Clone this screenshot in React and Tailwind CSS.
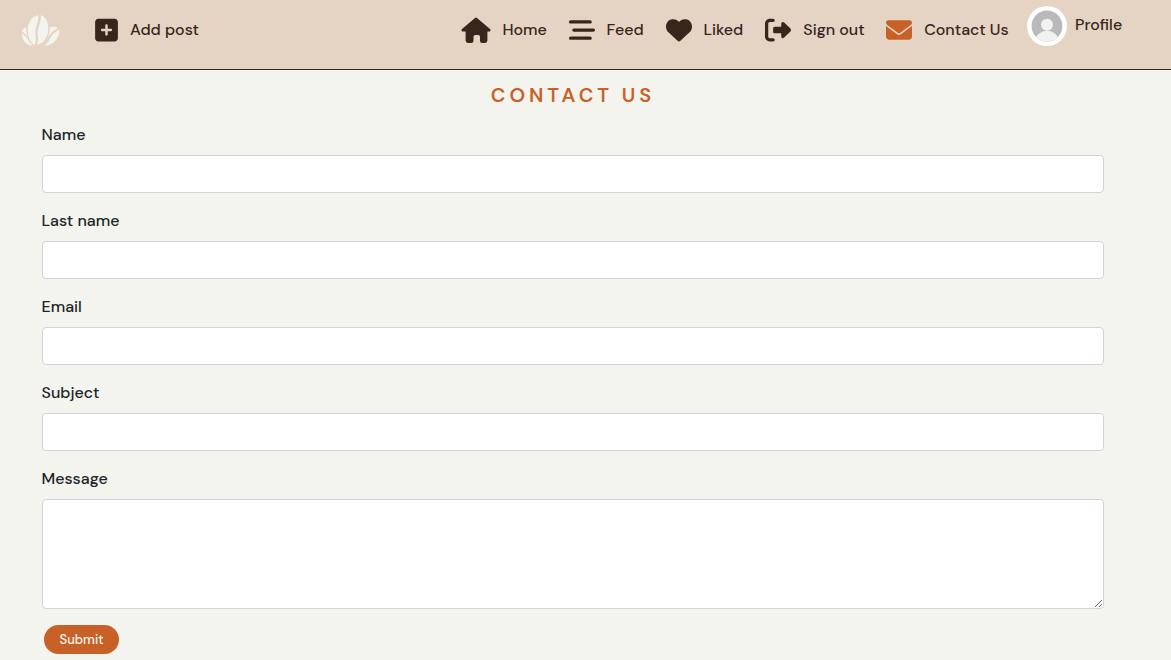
import React from "react";
import { FaSquarePlus, FaBarsStaggered, FaHeart, FaRightFromBracket, FaEnvelope } from "react-icons/fa6";

function Logo() {
  return (
    <svg className="mt-[15px] h-8 w-10 shrink-0" viewBox="0 0 40 32" fill="#f3f4ed">
      <path d="M14.8 1.1C9.5 3 6.5 9.2 6.8 16.2C7 22 9 27.4 13.6 30C16.1 25 13.7 20.6 14.5 15C15.1 10 18.3 5.4 17.1.3C16.4.2 15.7.7 14.8 1.1Z" />
      <path d="M19.6.3C21 6 17.3 10.5 16.8 16C16.4 21 18.2 24.5 15.9 29.5C22.7 29.2 27.6 21.3 27.3 12.8C27 6.5 23.8.8 19.6.3Z" />
      <path d="M5.2 12.5C2.6 12.4 1.2 14.6 1 16.7C3.6 18.1 5.5 19.8 7 22.4C5.7 19.3 5.1 16.1 5.2 12.5Z" />
      <path d="M.8 18.5C.7 25 5.7 31.2 11.7 30.6C9.7 28.9 8.5 26.7 7 24.6C5.4 22.1 3.3 19.8.8 18.5Z" />
      <path d="M28.8 12.5C29 18.9 26.6 24.6 22.6 28.2C25.8 25.9 26.4 22.5 29.1 19.2C31.4 16.5 34.2 15.1 36.8 13.3C34.9 11.8 31.3 11.4 28.8 12.5Z" />
      <path d="M38.1 14.5C34.9 17.1 31.7 18.6 29.7 22.2C28 25.4 26.7 28.4 23.1 30.4C30.9 32.2 39.8 22.5 38.1 14.5Z" />
    </svg>
  );
}

function HouseIcon() {
  return (
    <svg className="h-[26px] w-[30px] shrink-0" viewBox="0 0 30 26" fill="currentColor">
      <path d="M14 .9Q15 .1 16 .9L29 12.1Q30 13.1 29.3 14Q29 14.6 28 14.6H26.4V23.6Q26.4 26 24 26H21.2Q19 26 19 23.7V19.8Q19 18 17.3 18H14.4Q12.5 18 12.5 19.8V23.7Q12.5 26 10.2 26H7Q4.6 26 4.6 23.6V14.6H2Q1 14.6.7 14Q.1 13 1 12.1Z" />
    </svg>
  );
}

function Avatar() {
  return (
    <svg className="h-10 w-10 shrink-0" viewBox="0 0 40 40">
      <defs>
        <clipPath id="avatar"><circle cx="20" cy="20" r="15.4" /></clipPath>
      </defs>
      <circle cx="20" cy="20" r="20" fill="#fff" />
      <g clipPath="url(#avatar)">
        <rect width="40" height="40" fill="#b9b9b9" />
        <circle cx="20" cy="18.7" r="6" fill="#f1f1f1" />
        <ellipse cx="20" cy="35" rx="11.5" ry="10.2" fill="#f1f1f1" />
      </g>
    </svg>
  );
}

function NavLink({ icon, label, className }) {
  return (
    <a href="#" className={`mt-[17px] flex h-[26px] items-center whitespace-nowrap leading-[26px] ${className}`}>
      {icon}
      <span>{label}</span>
    </a>
  );
}

const fields = ["Name", "Last name", "Email", "Subject"];

export default function App() {
  return (
    <div className="h-[660px] overflow-hidden bg-[#f3f4ed] font-['DM_Sans','Inter',sans-serif] text-base font-medium text-[#212529]">
      <header className="flex h-[70px] items-start border-b border-[#38251c] bg-[#e5d4c4] text-[#38251c]">
        <div className="ml-[21px] w-[74px]"><Logo /></div>
        <NavLink icon={<FaSquarePlus className="h-[26px] w-[23px]" />} label="Add post" className="w-[366px] gap-3" />
        <NavLink icon={<HouseIcon />} label="Home" className="w-[108px] gap-[11.4px]" />
        <NavLink icon={<FaBarsStaggered className="h-[26px] w-[26px]" />} label="Feed" className="w-[96.7px] gap-[11.6px]" />
        <NavLink icon={<FaHeart className="h-[26px] w-[26px]" />} label="Liked" className="w-[99.3px] gap-[11.7px]" />
        <NavLink icon={<FaRightFromBracket className="h-[26px] w-[26px]" />} label="Sign out" className="w-[121.4px] gap-[12.3px]" />
        <NavLink icon={<FaEnvelope className="h-[26px] w-[26px] text-[#c76128]" />} label="Contact Us" className="w-[140.6px] gap-[11.8px]" />
        <a href="#" className="mt-1.5 flex items-start gap-2">
          <Avatar />
          <span className="mt-[7px] leading-6">Profile</span>
        </a>
      </header>
      <main className="ml-[42px] w-[1062px]">
        <h1 className="mt-[13px] mb-4 text-center text-[20px] leading-6 font-semibold tracking-[4px] text-[#c76128]">CONTACT US</h1>
        <form>
          {fields.map((label) => (
            <div key={label} className="mb-4">
              <label className="mb-2 -ml-[0.5px] block leading-6">{label}</label>
              <input aria-label={label} className="block h-[38px] w-full rounded border border-[#ced4da] bg-white px-3" />
            </div>
          ))}
          <label className="mb-2 -ml-[0.5px] block leading-6">Message</label>
          <textarea aria-label="Message" className="block h-[110px] w-full resize-y rounded border border-[#ced4da] bg-white px-3" />
          <button type="button" className="mt-4 ml-0.5 flex h-[29px] w-[75px] items-center justify-center rounded-full bg-[#c76128] pt-px text-[13px] text-[#f3f4ed]">
            Submit
          </button>
        </form>
      </main>
    </div>
  );
}
